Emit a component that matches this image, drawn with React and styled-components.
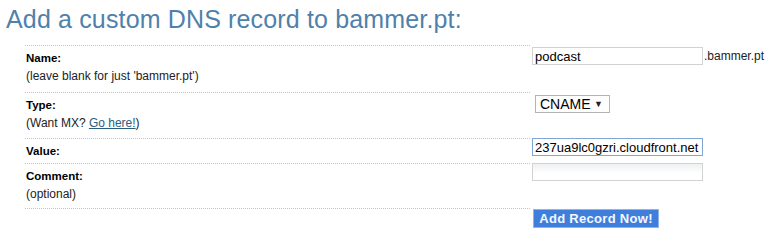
import * as React from 'react';
import styled, { createGlobalStyle } from 'styled-components';

const GlobalStyle = createGlobalStyle`
  body {
    margin: 0;
    background: #fff;
    font-family: "Liberation Sans", Arial, sans-serif;
  }
`;

const Page = styled.div`
  padding: 6px 0 0 6px;
  box-sizing: border-box;
  width: 780px;
  height: 239px;
  overflow: hidden;
`;

const Title = styled.h1`
  margin: 0;
  font-size: 25px;
  line-height: 26px;
  font-weight: normal;
  letter-spacing: 0.15px;
  color: #4f81ab;
`;

const Form = styled.div`
  margin: 13px 0 0 19px;
  display: flex;
  flex-direction: column;
`;

const Row = styled.div`
  display: grid;
  grid-template-columns: 505px 1fr;
  height: ${props => props.h}px;
`;

const LabelCell = styled.div`
  border-top: 1px dotted #c4c4c4;
  padding: 4px 0 0 1px;
  box-sizing: border-box;
`;

const FieldCell = styled.div`
  display: flex;
  align-items: flex-start;
  padding-top: ${props => props.pt || 0}px;
  padding-left: ${props => props.pl || 2}px;
  box-sizing: border-box;
`;

const Label = styled.div`
  font-size: 11.5px;
  line-height: 16px;
  font-weight: bold;
  color: #000;
`;

const Hint = styled.div`
  font-size: 12px;
  line-height: 18px;
  margin-top: 1px;
  color: #222;
`;

const Link = styled.a`
  color: #2b5d7c;
  text-decoration: underline;
`;

const TextInput = styled.input`
  width: 171px;
  height: 18px;
  box-sizing: border-box;
  margin: 0;
  padding: 0 2px;
  font-family: "Liberation Sans", Arial, sans-serif;
  font-size: 13px;
  color: #000;
  border: 1px solid ${props => (props.focused ? '#7fa6d4' : '#d2d2d2')};
  background: ${props => (props.soft ? 'linear-gradient(#eef0f2, #fff 60%)' : '#fff')};
  outline: none;
`;

const Suffix = styled.span`
  font-size: 12px;
  line-height: 18px;
  color: #222;
  margin-left: 1px;
`;

const SelectBox = styled.div`
  display: flex;
  align-items: center;
  width: 75px;
  height: 18px;
  box-sizing: border-box;
  border: 1px solid #b4b4b4;
  background: #fff;
  padding: 0 0 0 4px;
`;

const Select = styled.select`
  appearance: none;
  border: none;
  background: transparent;
  font-family: "Liberation Sans", Arial, sans-serif;
  font-size: 14px;
  color: #000;
  padding: 0;
  margin: 0;
  width: 54px;
  outline: none;
`;

const Arrow = styled.span`
  font-size: 9px;
  color: #222;
`;

const Button = styled.button`
  width: 126px;
  height: 19px;
  margin: 0;
  padding: 0;
  box-sizing: border-box;
  border: 1px solid #8fb4ea;
  background: #3f7fdb;
  color: #f4f8ff;
  font-family: "Liberation Sans", Arial, sans-serif;
  font-size: 13px;
  font-weight: bold;
  letter-spacing: 0.3px;
  cursor: pointer;
`;

export default class extends React.Component {
  render () {
    return (
      <Page>
        <GlobalStyle />
        <Title>Add a custom DNS record to bammer.pt:</Title>
        <Form>
          <Row h={47}>
            <LabelCell>
              <Label>Name:</Label>
              <Hint>(leave blank for just 'bammer.pt')</Hint>
            </LabelCell>
            <FieldCell pt={2}>
              <TextInput defaultValue="podcast" />
              <Suffix>.bammer.pt</Suffix>
            </FieldCell>
          </Row>
          <Row h={46}>
            <LabelCell>
              <Label>Type:</Label>
              <Hint>(Want MX? <Link href="#">Go here!</Link>)</Hint>
            </LabelCell>
            <FieldCell pt={3} pl={5}>
              <SelectBox>
                <Select defaultValue="CNAME">
                  <option>CNAME</option>
                  <option>A</option>
                </Select>
                <Arrow>▼</Arrow>
              </SelectBox>
            </FieldCell>
          </Row>
          <Row h={25}>
            <LabelCell>
              <Label>Value:</Label>
            </LabelCell>
            <FieldCell>
              <TextInput focused defaultValue="237ua9lc0gzri.cloudfront.net" />
            </FieldCell>
          </Row>
          <Row h={45}>
            <LabelCell>
              <Label>Comment:</Label>
              <Hint>(optional)</Hint>
            </LabelCell>
            <FieldCell>
              <TextInput soft defaultValue="" />
            </FieldCell>
          </Row>
          <Row h={24}>
            <LabelCell />
            <FieldCell pt={1} pl={3}>
              <Button>Add Record Now!</Button>
            </FieldCell>
          </Row>
        </Form>
      </Page>
    );
  }
}
